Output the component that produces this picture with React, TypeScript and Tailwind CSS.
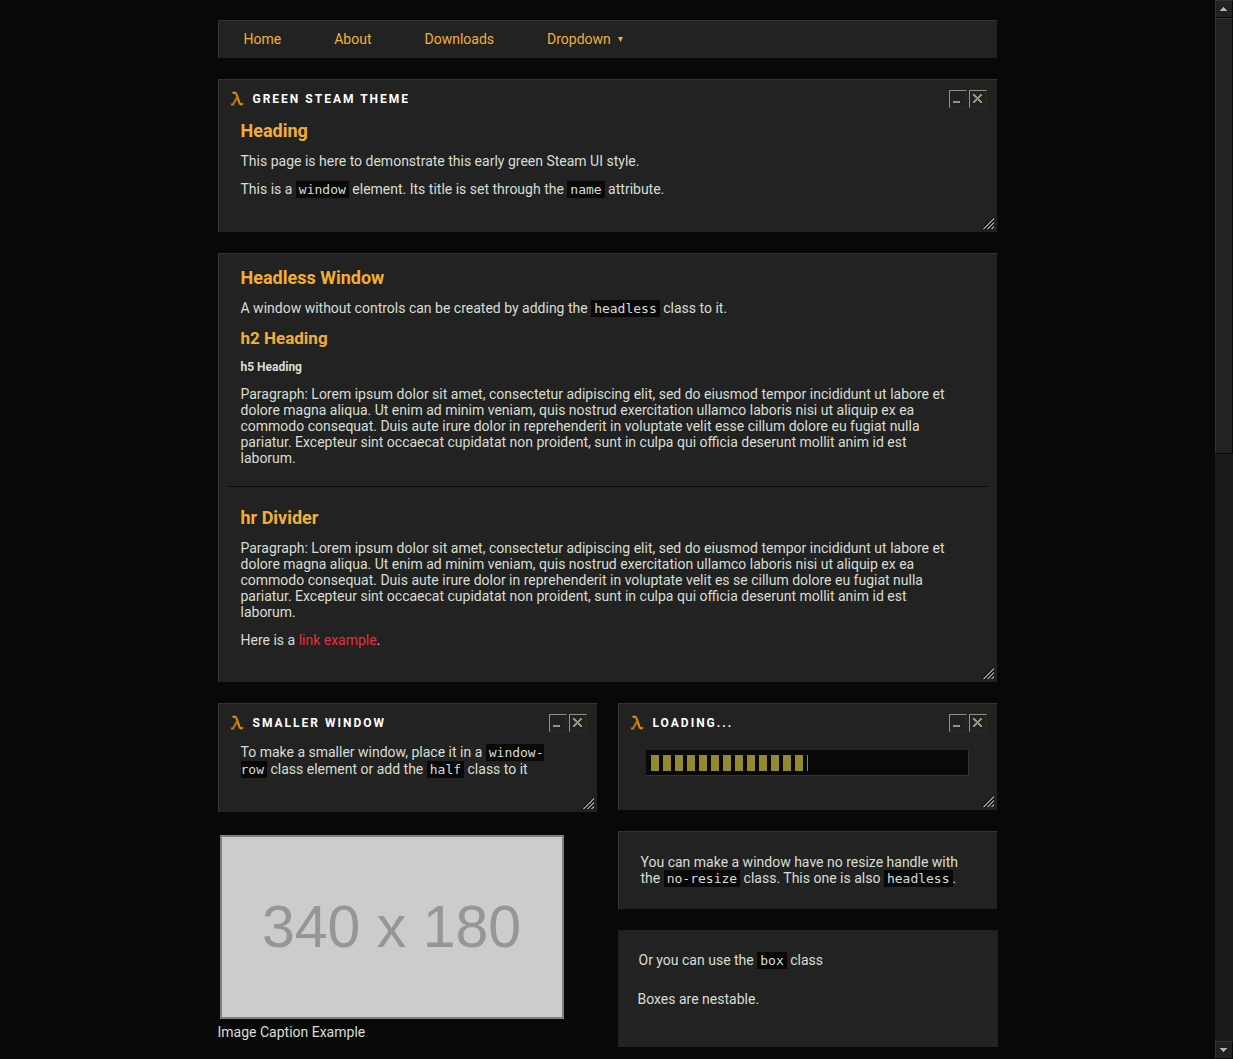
import { type ReactNode } from 'react';

const lorem = (verb: string) =>
  `Paragraph: Lorem ipsum dolor sit amet, consectetur adipiscing elit, sed do eiusmod tempor incididunt ut labore et dolore magna aliqua. Ut enim ad minim veniam, quis nostrud exercitation ullamco laboris nisi ut aliquip ex ea commodo consequat. Duis aute irure dolor in reprehenderit in voluptate velit ${verb} cillum dolore eu fugiat nulla pariatur. Excepteur sint occaecat cupidatat non proident, sunt in culpa qui officia deserunt mollit anim id est laborum.`;

const PANEL = 'border border-t-[#333333] border-l-[#333333] border-r-[#080808] border-b-[#080808] bg-[#222222]';

function Code({ children }: { children: ReactNode }) {
  return (
    <code className="bg-[#080808] px-[3px] py-px font-['DejaVu_Sans_Mono',monospace] text-[13px] leading-none">
      {children}
    </code>
  );
}

function LambdaIcon() {
  return (
    <svg width="14" height="16" viewBox="0 0 14 16" fill="none" aria-hidden="true">
      <path d="M2.6 2.4 C4.6 0.9 6 1.6 6.8 4 L9.4 11.8 C10 13.8 11.2 14 12.8 12.2" stroke="#d08c10" strokeWidth="2.2" />
      <path d="M7.2 6.2 L3.2 13 M0.8 13.6 L4.2 13.6" stroke="#b87a10" strokeWidth="2" />
    </svg>
  );
}

function ControlButton({ label, children }: { label: string; children: ReactNode }) {
  return (
    <button
      type="button"
      aria-label={label}
      className="size-[18px] border border-t-[#8e9682] border-l-[#8e9682] border-r-[#2b2c23] border-b-[#2b2c23]"
    >
      <svg width="16" height="16" viewBox="0 0 16 16" shapeRendering="crispEdges" fill="#8e9682" aria-hidden="true">
        {children}
      </svg>
    </button>
  );
}

function CloseGlyph() {
  return (
    <>
      {Array.from({ length: 9 }, (_, i) => {
        const start = Math.max(3, 2 + i);
        const end = Math.min(12, 5 + i);
        return (
          <g key={i}>
            <rect x={start} y={3 + i} width={end - start} height="1" />
            <rect x={15 - end} y={3 + i} width={end - start} height="1" />
          </g>
        );
      })}
    </>
  );
}

function ResizeHandle() {
  return (
    <svg
      className="absolute right-[3px] bottom-[3px]"
      width="12"
      height="12"
      viewBox="0 0 12 12"
      shapeRendering="crispEdges"
      aria-hidden="true"
    >
      {[0, 4, 8].map((start) =>
        Array.from({ length: 12 - start }, (_, i) => (
          <g key={`${start}-${i}`}>
            <rect x={start + i} y={11 - i} width="1" height="1" fill="#080808" />
            <rect x={start + i + 1} y={11 - i} width="2" height="1" fill="#8e9682" />
          </g>
        )),
      )}
    </svg>
  );
}

function WindowHeader({ title }: { title: string }) {
  return (
    <header className="mb-3 flex h-[18px] items-center">
      <div className="flex flex-1 items-center gap-[9px] pl-px">
        <LambdaIcon />
        <h3 className="text-[12px] leading-[18px] font-bold tracking-[2px] text-white uppercase">{title}</h3>
      </div>
      <div className="flex gap-[2px]">
        <ControlButton label="Minimize">
          <rect x="3" y="10" width="7" height="2" />
        </ControlButton>
        <ControlButton label="Close">
          <CloseGlyph />
        </ControlButton>
      </div>
    </header>
  );
}

function Window({ title, children }: { title: string; children: ReactNode }) {
  return (
    <section className={`relative px-[10px] pt-[10px] pb-[34px] ${PANEL}`}>
      <WindowHeader title={title} />
      {children}
      <ResizeHandle />
    </section>
  );
}

function H1({ children }: { children: ReactNode }) {
  return <h1 className="text-[18px] leading-[21px] font-bold text-[#f3af34]">{children}</h1>;
}

function ScrollArrow({ up }: { up?: boolean }) {
  return (
    <button
      type="button"
      aria-label={up ? 'Scroll up' : 'Scroll down'}
      className={`flex h-[18px] shrink-0 items-center justify-center ${PANEL}`}
    >
      <svg width="8" height="4" viewBox="0 0 8 4" shapeRendering="crispEdges" fill="#b4b4b4" aria-hidden="true">
        {up ? <path d="M3 0h1v1h1v1h1v1h1v1H0V3h1V2h1V1h1z" /> : <path d="M0 0h7v1H6v1H5v1H4v1H3V3H2V2H1V1H0z" />}
      </svg>
    </button>
  );
}

export default function App() {
  return (
    <div className="flex min-h-screen bg-[#080808] font-['Roboto',sans-serif] text-[14px] leading-4 text-[#d8ded3]">
      <main className="min-w-0 flex-1 px-4 pt-5 pb-3">
        <div className="mx-auto flex max-w-[780px] flex-col gap-5">
          <nav className={`flex gap-[53px] px-[25px] pt-[10px] pb-[11px] text-[#f3af34] ${PANEL}`}>
            <a href="#home">Home</a>
            <a href="#about">About</a>
            <a href="#downloads">Downloads</a>
            <button type="button" className="flex items-center gap-[7px]">
              Dropdown
              <svg width="5" height="5" viewBox="0 0 5 5" fill="currentColor" aria-hidden="true">
                <path d="M0 0h5L2.5 5z" />
              </svg>
            </button>
          </nav>

          <Window title="Green Steam Theme">
            <div className="flex flex-col gap-3 pr-8 pl-3">
              <H1>Heading</H1>
              <p>This page is here to demonstrate this early green Steam UI style.</p>
              <p className="leading-[17px]">
                This is a <Code>window</Code> element. Its title is set through the <Code>name</Code> attribute.
              </p>
            </div>
          </Window>

          <section className={`relative px-[10px] pt-[13px] pb-[34px] ${PANEL}`}>
            <div className="flex flex-col gap-3 pr-8 pl-3">
              <H1>Headless Window</H1>
              <p>
                A window without controls can be created by adding the <Code>headless</Code> class to it.
              </p>
              <h2 className="text-[17px] leading-5 font-bold text-[#f3af34]">h2 Heading</h2>
              <h5 className="text-[12px] leading-[14px] font-bold">h5 Heading</h5>
              <p>{lorem('esse')}</p>
            </div>
            <hr className="my-5 border-t border-[#080808]" />
            <div className="flex flex-col gap-3 pr-8 pl-3">
              <H1>hr Divider</H1>
              <p>{lorem('es se')}</p>
              <p>
                Here is a{' '}
                <a href="#link" className="text-[#e62e3e]">
                  link example
                </a>
                .
              </p>
            </div>
            <ResizeHandle />
          </section>

          <div className="grid grid-cols-2 items-start gap-5">
            <div className="flex flex-col gap-[22px]">
              <Window title="Smaller Window">
                <p className="pr-8 pl-3 leading-[17px]">
                  To make a smaller window, place it in a <Code>window-row</Code> class element or add the <Code>half</Code>{' '}
                  class to it
                </p>
              </Window>
              <figure>
                <div
                  role="img"
                  aria-label="Placeholder, 340 by 180"
                  className="mx-[2px] flex h-[184px] max-w-[344px] items-center justify-center border-2 border-[#798382] bg-[#cccccc] font-['Liberation_Sans',sans-serif] text-[59px] leading-none text-[#969696]"
                >
                  340 x 180
                </div>
                <figcaption className="mt-[5px]">Image Caption Example</figcaption>
              </figure>
            </div>

            <div className="flex flex-col gap-5">
              <Window title="Loading...">
                <div
                  role="progressbar"
                  aria-label="Loading"
                  aria-valuenow={50}
                  className="mr-[18px] ml-[17px] mt-[18px] h-[26px] border-r border-b border-[#333333] bg-[#080808] py-[5px] pr-[3px] pl-[5px]"
                >
                  <div className="h-4 w-1/2 bg-[repeating-linear-gradient(to_right,#958831_0,#958831_8px,transparent_8px,transparent_12px)]" />
                </div>
              </Window>
              <section className={`pt-[22px] pr-5 pb-[23px] pl-[22px] ${PANEL}`}>
                <p>
                  You can make a window have no resize handle with the <Code>no-resize</Code> class. This one is also{' '}
                  <Code>headless</Code>.
                </p>
              </section>
              <section className="bg-[#222222] px-5 pt-[22px] pb-10">
                <p className="px-px">
                  Or you can use the <Code>box</Code> class
                </p>
                <p className="mt-[23px]">Boxes are nestable.</p>
              </section>
            </div>
          </div>
        </div>
      </main>

      <aside aria-label="Scroll bar" className="sticky top-0 flex h-screen w-[18px] shrink-0 flex-col bg-[#191919]">
        <ScrollArrow up />
        <div className={`flex-[435] ${PANEL}`} />
        <div className="flex-[588]" />
        <ScrollArrow />
      </aside>
    </div>
  );
}
